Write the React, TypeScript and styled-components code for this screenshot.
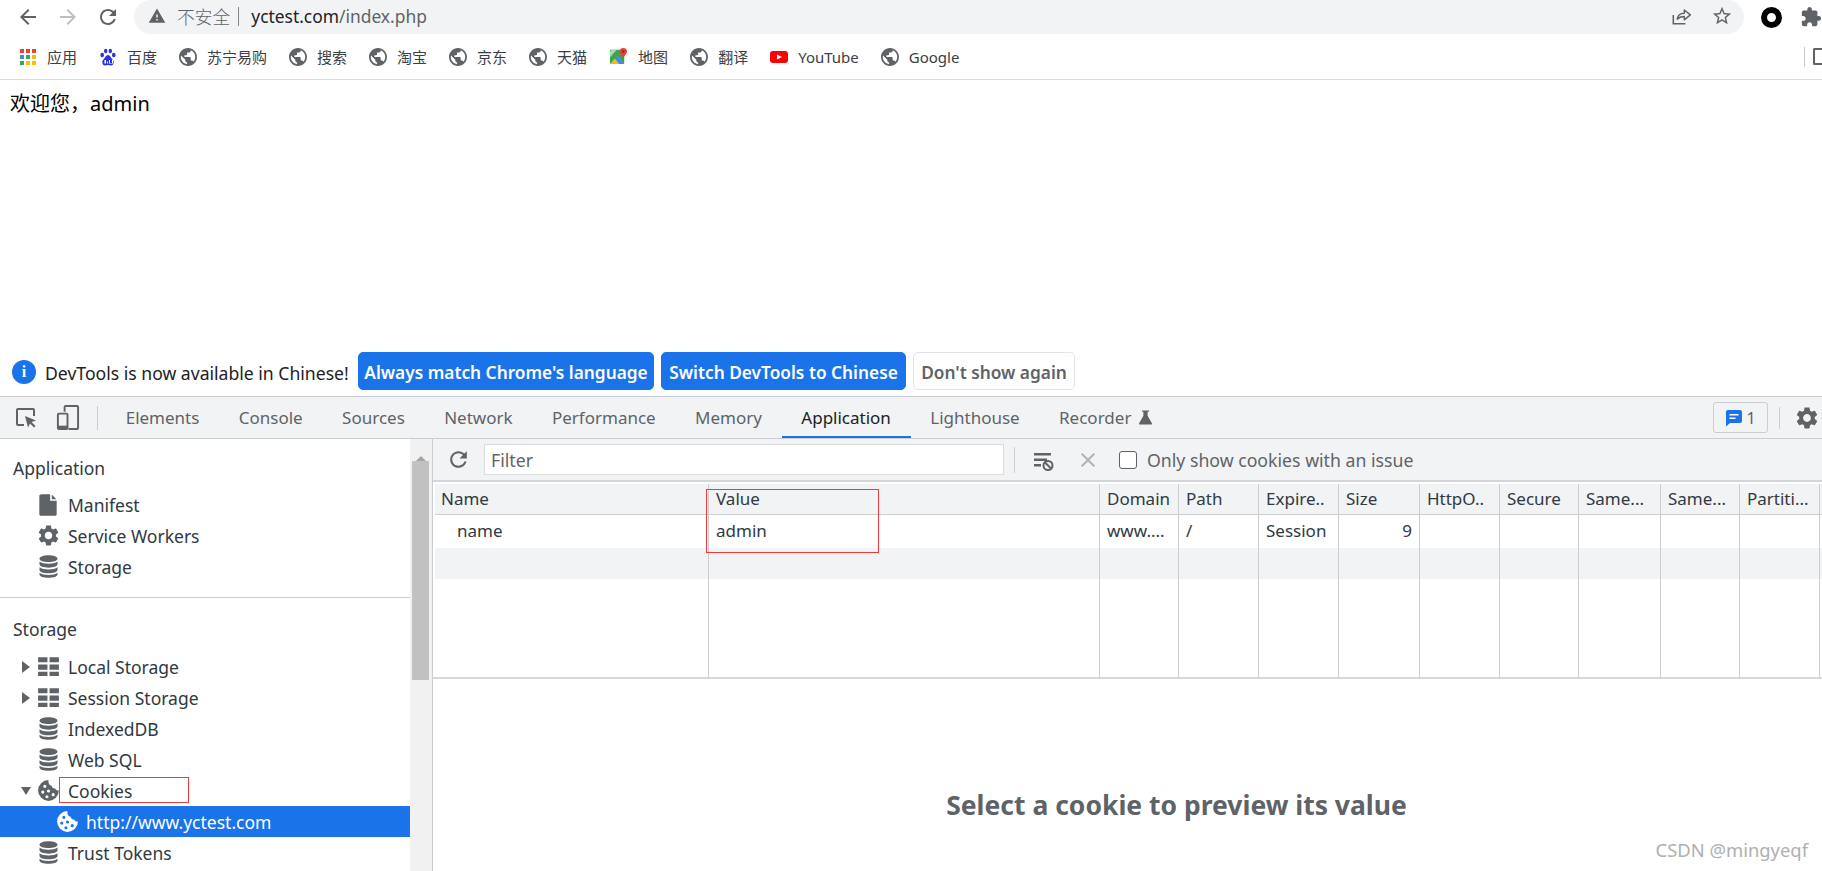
import React from "react";
import styled, { createGlobalStyle } from "styled-components";

const Global = createGlobalStyle`
  html, body { margin: 0; padding: 0; background: #fff; }
  body { font-family: "Noto Sans", "Noto Sans CJK SC", sans-serif; color: #202124; }
  svg { display: block; flex: none; }
  * { box-sizing: border-box; }
`;

const P = {
  back: "M20 11H7.83l5.59-5.59L12 4l-8 8 8 8 1.41-1.41L7.83 13H20v-2z",
  forward: "M12 4l-1.41 1.41L16.17 11H4v2h12.17l-5.58 5.59L12 20l8-8z",
  reload: "M17.65 6.35C16.2 4.9 14.21 4 12 4c-4.42 0-7.99 3.58-7.99 8s3.57 8 7.99 8c3.73 0 6.84-2.55 7.73-6h-2.08c-.82 2.33-3.04 4-5.65 4-3.31 0-6-2.69-6-6s2.69-6 6-6c1.66 0 3.14.69 4.22 1.78L13 11h7V4l-2.35 2.35z",
  warn: "M1 21h22L12 2 1 21zm12-3h-2v-2h2v2zm0-4h-2v-4h2v4z",
  globe: "M12 2C6.48 2 2 6.48 2 12s4.48 10 10 10 10-4.48 10-10S17.52 2 12 2zm-1 17.93c-3.95-.49-7-3.85-7-7.93 0-.62.08-1.21.21-1.79L9 15v1c0 1.1.9 2 2 2v1.93zm6.9-2.54c-.26-.81-1-1.39-1.9-1.39h-1v-3c0-.55-.45-1-1-1H8v-2h2c.55 0 1-.45 1-1V7h2c1.1 0 2-.9 2-2v-.41c2.93 1.19 5 4.06 5 7.41 0 2.08-.8 3.97-2.1 5.39z",
  star: "M22 9.24l-7.19-.62L12 2 9.19 8.63 2 9.24l5.46 4.73L5.82 21 12 17.27 18.18 21l-1.63-7.03L22 9.24zM12 15.4l-3.76 2.27 1-4.28-3.32-2.88 4.38-.38L12 6.1l1.71 4.04 4.38.38-3.32 2.88 1 4.28L12 15.4z",
  puzzle: "M20.5 11H19V7c0-1.1-.9-2-2-2h-4V3.5C13 2.12 11.88 1 10.5 1S8 2.12 8 3.5V5H4c-1.1 0-1.99.9-1.99 2v3.8H3.5c1.49 0 2.7 1.21 2.7 2.7s-1.21 2.7-2.7 2.7H2V20c0 1.1.9 2 2 2h3.8v-1.5c0-1.49 1.21-2.7 2.7-2.7 1.49 0 2.7 1.21 2.7 2.7V22H17c1.1 0 2-.9 2-2v-4h1.5c1.38 0 2.5-1.12 2.5-2.5S21.88 11 20.5 11z",
  gear: "M19.14 12.94c.04-.3.06-.61.06-.94 0-.32-.02-.64-.07-.94l2.03-1.58c.18-.14.23-.41.12-.61l-1.92-3.32c-.12-.22-.37-.29-.59-.22l-2.39.96c-.5-.38-1.03-.7-1.62-.94l-.36-2.54c-.04-.24-.24-.41-.48-.41h-3.84c-.24 0-.43.17-.47.41l-.36 2.54c-.59.24-1.13.57-1.62.94l-2.39-.96c-.22-.08-.47 0-.59.22L2.74 8.87c-.12.21-.08.47.12.61l2.03 1.58c-.05.3-.09.63-.09.94s.02.64.07.94l-2.03 1.58c-.18.14-.23.41-.12.61l1.92 3.32c.12.22.37.29.59.22l2.39-.96c.5.38 1.03.7 1.62.94l.36 2.54c.05.24.24.41.48.41h3.84c.24 0 .44-.17.47-.41l.36-2.54c.59-.24 1.13-.56 1.62-.94l2.39.96c.22.08.47 0 .59-.22l1.92-3.32c.12-.22.07-.47-.12-.61l-2.01-1.58zM12 15.6c-1.98 0-3.6-1.62-3.6-3.6s1.62-3.6 3.6-3.6 3.6 1.62 3.6 3.6-1.62 3.6-3.6 3.6z",
  db: "M12 2C7.6 2 4 3.3 4 5s3.6 3 8 3 8-1.3 8-3-3.6-3-8-3zM4 7.6V10c0 1.7 3.6 3 8 3s8-1.3 8-3V7.6C18.4 9 15.4 9.6 12 9.6S5.6 9 4 7.6zM4 12.6V15c0 1.7 3.6 3 8 3s8-1.3 8-3v-2.4c-1.6 1.4-4.6 2-8 2s-6.4-.6-8-2zM4 17.6V19c0 1.7 3.6 3 8 3s8-1.3 8-3v-1.4c-1.6 1.4-4.6 2-8 2s-6.4-.6-8-2z",
  table: "M2 3h9v5H2zM13 3h9v5h-9zM2 10h9v5H2zM13 10h9v5h-9zM2 17h9v4H2zM13 17h9v4h-9z",
  cookie: "M12 2a10 10 0 1 0 10 10c-1.5.3-3-.4-3.5-2-1.7.3-3.3-.8-3.5-2.5C13.2 7.3 11.5 5.5 12 2zM8.5 6.5a1.5 1.5 0 1 1 0 3 1.5 1.5 0 0 1 0-3zM6.5 12a1.5 1.5 0 1 1 0 3 1.5 1.5 0 0 1 0-3zM12 11a1.5 1.5 0 1 1 0 3 1.5 1.5 0 0 1 0-3zM10.5 16.5a1.5 1.5 0 1 1 0 3 1.5 1.5 0 0 1 0-3zM16.5 14.5a1.5 1.5 0 1 1 0 3 1.5 1.5 0 0 1 0-3z",
  flask: "M7 2h10v2h-2v5.5L21 20c.5 1-.2 2-1.3 2H4.3C3.2 22 2.5 21 3 20L9 9.5V4H7z",
  file: "M6 2h8v6h6v12.5c0 .8-.7 1.5-1.5 1.5h-13C4.7 22 4 21.3 4 20.5v-17C4 2.7 5 2 6 2zM15.5 2.4l4.2 4.2h-4.2z",
  clear: "M3 5h17v2.5H3zM3 10.5h13V13H3zM3 16h7v2.5H3z",
};

const Svg = styled.svg<{ $size: number; $color?: string }>`
  width: ${(p) => p.$size}px;
  height: ${(p) => p.$size}px;
  fill: ${(p) => p.$color ?? "#5f6368"};
`;

const Icon = ({ d, size = 18, color }: { d: string; size?: number; color?: string }) => (
  <Svg viewBox="0 0 24 24" $size={size} $color={color}>
    <path d={d} fillRule="evenodd" />
  </Svg>
);

const Globe = () => (
  <Svg viewBox="2 2 20 20" $size={18}>
    <path d={P.globe} fillRule="evenodd" />
  </Svg>
);

const Page = styled.div`
  position: relative;
  width: 1822px;
  height: 871px;
  overflow: hidden;
  display: flex;
  flex-direction: column;
`;

const AddressRow = styled.div`
  height: 40px;
  display: flex;
  align-items: flex-start;
  flex: none;
`;
const NavGroup = styled.div`
  width: 134px;
  height: 34px;
  display: flex;
  align-items: center;
  padding-left: 16px;
  gap: 16px;
`;
const Omnibox = styled.div`
  width: 1611px;
  height: 34px;
  border-radius: 17px;
  background: #f1f3f4;
  display: flex;
  align-items: center;
  padding: 0 11px 2px 14px;
  font-size: 17.4px;
  color: #5f6368;
`;
const Insecure = styled.span`
  margin-left: 11px;
  font-size: 17.8px;
  font-weight: 300;
`;
const PipeMark = styled.span`
  width: 1px;
  height: 19px;
  background: #80868b;
  margin: 0 12px 0 8px;
`;
const Host = styled.span`
  color: #202124;
`;
const UrlPath = styled.span``;
const OmniActions = styled.div`
  margin-left: auto;
  display: flex;
  align-items: center;
  gap: 19px;
`;
const ExtGroup = styled.div`
  display: flex;
  align-items: center;
  height: 34px;
  gap: 18px;
  padding-left: 17px;
`;
const Ring = styled.span`
  width: 21px;
  height: 21px;
  border-radius: 50%;
  border: 6px solid #000;
`;

const BookmarkBar = styled.div`
  height: 40px;
  flex: none;
  border-bottom: 1px solid #d9dadc;
  display: flex;
  align-items: center;
  padding: 0 0 6px 19px;
  gap: 22px;
`;
const Bookmark = styled.div`
  display: flex;
  align-items: center;
  gap: 10px;
  font-size: 15px;
  color: #3c4043;
`;
const BarEnd = styled.div`
  margin-left: auto;
  display: flex;
  align-items: center;
  gap: 8px;
  margin-right: -3px;
`;
const BarSep = styled.span`
  width: 1px;
  height: 20px;
  background: #c8cacc;
`;
const ListIcon = styled.span`
  width: 12px;
  height: 17px;
  border: 2px solid #5f6368;
  border-right: none;
  border-radius: 2px 0 0 2px;
`;

const PageBody = styled.div`
  flex: 1;
  padding: 12px 10px 0;
  font-size: 20px;
  line-height: 24px;
  color: #000;
`;

const Infobar = styled.div`
  flex: none;
  height: 44px;
  display: flex;
  align-items: flex-start;
  padding-left: 12px;
  font-size: 17.6px;
  color: #202124;
`;
const InfoDot = styled.span`
  width: 24px;
  height: 24px;
  margin-top: 8px;
  border-radius: 50%;
  background: #1a73e8;
  color: #fff;
  font: 700 16px/24px "Liberation Serif", serif;
  text-align: center;
`;
const InfoText = styled.span`
  margin: 0 10px 0 9px;
  line-height: 42px;
  width: 303px;
  white-space: nowrap;
`;
const InfoBtn = styled.button<{ $primary?: boolean; $w: number }>`
  width: ${(p) => p.$w}px;
  height: 38px;
  margin-right: 7px;
  padding: 2px 0 0;
  border-radius: 5px;
  border: 1px solid ${(p) => (p.$primary ? "#1a73e8" : "#e2e3e5")};
  background: ${(p) => (p.$primary ? "#1a73e8" : "#fff")};
  color: ${(p) => (p.$primary ? "#fff" : "#5f6368")};
  font: 600 17.3px "Noto Sans", sans-serif;
  white-space: nowrap;
`;

const DevTools = styled.div`
  flex: none;
  height: 475px;
  border-top: 1px solid #cacdd1;
  display: flex;
  flex-direction: column;
`;
const TabBar = styled.div`
  height: 42px;
  flex: none;
  background: #f1f3f4;
  border-bottom: 1px solid #cacdd1;
  display: flex;
  align-items: stretch;
  padding-left: 15px;
`;
const ToolIcons = styled.div`
  display: flex;
  align-items: center;
  gap: 18px;
`;
const VSep = styled.span<{ $h?: number }>`
  width: 1px;
  height: ${(p) => p.$h ?? 24}px;
  background: #cacdd1;
  flex: none;
`;
const TabSep = styled(VSep)`
  align-self: center;
  margin: 0 8px 0 17px;
`;
const Tab = styled.div<{ $active?: boolean }>`
  display: flex;
  align-items: center;
  gap: 6px;
  padding: 0 19.7px;
  font-size: 17px;
  color: ${(p) => (p.$active ? "#202124" : "#5f6368")};
  box-shadow: ${(p) => (p.$active ? "inset 0 -2px 0 #1a73e8" : "none")};
`;
const TabRight = styled.div`
  margin-left: auto;
  display: flex;
  align-items: center;
  padding-right: 2px;
`;
const IssueBtn = styled.div`
  width: 55px;
  height: 31px;
  border: 1px solid #cacdd1;
  border-radius: 3px;
  display: flex;
  align-items: center;
  justify-content: center;
  gap: 3px;
  font-size: 16px;
  color: #5f6368;
  margin-right: 11px;
`;
const GearSlot = styled.div`
  margin-left: 14px;
`;

const Main = styled.div`
  flex: 1;
  min-height: 0;
  display: flex;
`;
const Sidebar = styled.div`
  width: 410px;
  flex: none;
  overflow: hidden;
  font-size: 17.5px;
  color: #303942;
`;
const SideHead = styled.div<{ $top: number; $bottom: number }>`
  padding: ${(p) => p.$top}px 13px ${(p) => p.$bottom}px;
  line-height: 32px;
`;
const SideRow = styled.div<{ $child?: boolean; $selected?: boolean }>`
  height: 31px;
  display: flex;
  align-items: center;
  padding-left: ${(p) => (p.$child ? 55 : 21)}px;
  background: ${(p) => (p.$selected ? "#1a73e8" : "transparent")};
  color: ${(p) => (p.$selected ? "#fff" : "inherit")};
  white-space: nowrap;
`;
const Arrow = styled.span<{ $open?: boolean }>`
  width: 15px;
  flex: none;
  display: flex;
  &::before {
    content: "";
    display: ${(p) => (p.$open === undefined ? "none" : "block")};
    border-style: solid;
    border-color: transparent;
    ${(p) =>
      p.$open
        ? "border-width: 8px 5.5px 0; border-top-color: #5f6368;"
        : "margin-left: 1px; border-width: 6px 0 6px 8px; border-left-color: #5f6368;"}
  }
`;
const RowIcon = styled.span<{ $gap?: number }>`
  width: 24px;
  display: flex;
  justify-content: center;
  margin-right: ${(p) => p.$gap ?? 8}px;
  flex: none;
`;
const SideRule = styled.div`
  height: 1px;
  margin-top: 15px;
  background: #cacdd1;
`;
const Scroll = styled.div`
  width: 23px;
  flex: none;
  background: #f1f1f1;
  border-right: 1px solid #cacdd1;
  display: flex;
  flex-direction: column;
  align-items: flex-start;
  padding-left: 2px;
`;
const ScrollUp = styled.span`
  margin: 0 0 6px 4px;
  height: 16px;
  border-style: solid;
  border-color: transparent transparent #a3a3a3;
  border-width: 0 5px 5px;
  width: 0;
  transform: translateY(6px);
`;
const Thumb = styled.div`
  width: 17px;
  height: 219px;
  background: #c1c1c1;
`;

const Right = styled.div`
  flex: 1;
  min-width: 0;
  display: flex;
  flex-direction: column;
  position: relative;
`;
const FilterBar = styled.div`
  height: 43px;
  flex: none;
  background: #f1f3f4;
  border-bottom: 2px solid #d3d5d8;
  display: flex;
  align-items: center;
  padding-left: 13px;
  font-size: 17.7px;
  color: #5f6368;
`;
const FilterInput = styled.div`
  width: 520px;
  height: 31px;
  margin-left: 13px;
  padding-left: 6px;
  background: #fff;
  border: 1px solid #dadce0;
  line-height: 31px;
  color: #5f6368;
`;
const FilterSep = styled(VSep)`
  margin: 0 16px 0 10px;
`;
const IconGap = styled.span`
  margin-left: 21px;
`;
const Check = styled.span`
  width: 18px;
  height: 18px;
  margin: 0 10px 0 19px;
  background: #fff;
  border: 1.5px solid #5f6368;
  border-radius: 3px;
`;

const Table = styled.div`
  flex: none;
  height: 197px;
  padding: 2px 0 0 2px;
  border-bottom: 2px solid #d5d7da;
  display: flex;
  flex-direction: column;
  font-size: 17px;
  color: #303942;
`;
const GridRow = styled.div<{ $h?: number; $bg?: string; $line?: boolean }>`
  display: grid;
  grid-template-columns: 274px 391px 79px 80px 80px 81px 80px 79px 82px 79px 80px;
  height: ${(p) => (p.$h ? `${p.$h}px` : "auto")};
  flex: ${(p) => (p.$h ? "none" : "1")};
  background: ${(p) => p.$bg ?? "#fff"};
  border-bottom: ${(p) => (p.$line ? "1px solid #cacdd1" : "none")};
`;
const Cell = styled.div<{ $pad?: number; $end?: boolean }>`
  border-right: 1px solid #cacdd1;
  padding: 0 ${(p) => (p.$end ? 7 : 0)}px 2px ${(p) => p.$pad ?? 7}px;
  display: flex;
  align-items: center;
  justify-content: ${(p) => (p.$end ? "flex-end" : "flex-start")};
  white-space: nowrap;
  overflow: hidden;
`;

const Preview = styled.div`
  flex: 1;
  padding: 110px 0 0 98px;
  text-align: center;
  font-size: 26.5px;
  line-height: 32px;
  font-weight: 700;
  color: #5f6368;
`;
const Watermark = styled.div`
  position: absolute;
  right: 14px;
  bottom: 10px;
  font-size: 18.4px;
  line-height: 22px;
  color: #b0b0b0;
`;
const RedBox = styled.div<{ $x: number; $y: number; $w: number; $h: number }>`
  position: absolute;
  left: ${(p) => p.$x}px;
  top: ${(p) => p.$y}px;
  width: ${(p) => p.$w}px;
  height: ${(p) => p.$h}px;
  border: 1px solid #f03a3a;
  pointer-events: none;
`;

const GridDots = () => (
  <Svg viewBox="0 0 18 18" $size={18}>
    {[0, 1, 2].flatMap((r) =>
      [0, 1, 2].map((c) => (
        <rect
          key={`${r}${c}`}
          x={1 + c * 6}
          y={1 + r * 6}
          width="4"
          height="4"
          fill={[["#ea4335", "#ea4335", "#ea4335"], ["#4285f4", "#34a853", "#fbbc04"], ["#34a853", "#fbbc04", "#fbbc04"]][r][c]}
        />
      ))
    )}
  </Svg>
);

const Baidu = () => (
  <Svg viewBox="0 0 18 18" $size={18} $color="#2932e1">
    <ellipse cx="3.2" cy="7" rx="1.8" ry="2.3" />
    <ellipse cx="6.7" cy="3" rx="1.7" ry="2.3" />
    <ellipse cx="11.3" cy="3" rx="1.7" ry="2.3" />
    <ellipse cx="14.8" cy="7" rx="1.8" ry="2.3" />
    <path d="M9 7c-2 0-3 3-5 5-1.5 2-.5 5.5 2 5.5 1 0 2-.4 3-.4s2 .4 3 .4c2.5 0 3.5-3.500 2-5.500-2-2-3-5-5-5z" />
    <path d="M5.5 12H7v3.5H5.500zM8 13.500h1v2H8zM10 12h1v3h2v-3h1v3.500h-4z" fill="#fff" />
  </Svg>
);

const Maps = () => (
  <Svg viewBox="0 0 20 20" $size={19}>
    <rect x="1" y="3" width="15" height="15" rx="1" fill="#34a853" />
    <path d="M1 18 L9 9 L16 18z" fill="#fbbc04" />
    <path d="M9 9l7 9h-5L6 12z" fill="#4285f4" />
    <path d="M3 3h5L1 11V5z" fill="#a8dab5" />
    <path d="M15 1c2.5 0 4 1.8 4 3.7 0 2.3-3 4.5-4 7.3-1-2.8-4-5-4-7.3C11 2.8 12.5 1 15 1z" fill="#ea4335" />
    <circle cx="15" cy="4.8" r="1.4" fill="#a52714" />
  </Svg>
);

const YouTube = () => (
  <Svg viewBox="0 0 18 14" $size={18}>
    <rect x="0" y="1" width="18" height="12" rx="3" fill="#f00" />
    <path d="M7 4.5L12 7l-5 2.5z" fill="#fff" />
  </Svg>
);

const Share = () => (
  <Svg viewBox="0 0 20 20" $size={22}>
    <path d="M3 9v8h11" fill="none" stroke="#5f6368" strokeWidth="1.4" />
    <path d="M6.5 13c.5-3.5 3-5.500 6.500-5.500V4.500l5.500 4.500-5.500 4.500v-3c-2.700 0-5 .8-6.500 2.500z" fill="none" stroke="#5f6368" strokeWidth="1.3" strokeLinejoin="round" />
  </Svg>
);

const Inspect = () => (
  <Svg viewBox="0 0 22 22" $size={22}>
    <path d="M9 18H3a1 1 0 0 1-1-1V3a1 1 0 0 1 1-1h15a1 1 0 0 1 1 1v6" fill="none" stroke="#5f6368" strokeWidth="2" />
    <path d="M10 9l11 4.5-4.500 1.500 4 4-1.500 1.500-4-4L13 20.500z" fill="#5f6368" />
  </Svg>
);

const Device = () => (
  <Svg viewBox="0 0 24 26" $size={25}>
    <path d="M9 7V2a1 1 0 0 1 1-1h12a1 1 0 0 1 1 1v22a1 1 0 0 1-1 1H13" fill="none" stroke="#5f6368" strokeWidth="2" />
    <rect x="2" y="9" width="10" height="16" rx="1" fill="none" stroke="#5f6368" strokeWidth="2" />
    <rect x="2" y="21.5" width="10" height="3.5" fill="#5f6368" />
  </Svg>
);

const ClearFilter = () => (
  <Svg viewBox="0 0 24 24" $size={24}>
    <path d={P.clear} />
    <circle cx="17" cy="17.5" r="4.5" fill="none" stroke="#5f6368" strokeWidth="2" />
    <path d="M14 14.5l6 6" stroke="#5f6368" strokeWidth="2" />
  </Svg>
);

const Bubble = () => (
  <Svg viewBox="0 0 18 18" $size={18} $color="#1a73e8">
    <path d="M3 1h12a2 2 0 0 1 2 2v9a2 2 0 0 1-2 2H5l-4 3.5V3a2 2 0 0 1 2-2z" />
    <path d="M4.5 5h9v1.500h-9zM4.500 8.500h6V10h-6z" fill="#fff" />
  </Svg>
);

const Cross = () => (
  <Svg viewBox="0 0 24 24" $size={24} $color="#b0b3b8">
    <path d="M19 6.41L17.59 5 12 10.59 6.41 5 5 6.41 10.59 12 5 17.59 6.41 19 12 13.41 17.59 19 19 17.59 13.41 12z" />
  </Svg>
);

const marks = ["苏宁易购", "搜索", "淘宝", "京东", "天猫"];
const tabs = ["Elements", "Console", "Sources", "Network", "Performance", "Memory", "Application", "Lighthouse"];
const headers = ["Name", "Value", "Domain", "Path", "Expire..", "Size", "HttpO..", "Secure", "Same...", "Same...", "Partiti..."];
const blank = Array.from({ length: 11 });

export default function App() {
  return (
    <Page>
      <Global />
      <AddressRow>
        <NavGroup>
          <Icon d={P.back} size={24} />
          <Icon d={P.forward} size={24} color="#bdc1c6" />
          <Icon d={P.reload} size={24} />
        </NavGroup>
        <Omnibox>
          <Icon d={P.warn} size={18} />
          <Insecure>不安全</Insecure>
          <PipeMark />
          <Host>yctest.com</Host>
          <UrlPath>/index.php</UrlPath>
          <OmniActions>
            <Share />
            <Icon d={P.star} size={22} />
          </OmniActions>
        </Omnibox>
        <ExtGroup>
          <Ring />
          <Icon d={P.puzzle} size={22} />
        </ExtGroup>
      </AddressRow>
      <BookmarkBar>
        <Bookmark><GridDots />应用</Bookmark>
        <Bookmark><Baidu />百度</Bookmark>
        {marks.map((m) => (
          <Bookmark key={m}><Globe />{m}</Bookmark>
        ))}
        <Bookmark><Maps />地图</Bookmark>
        <Bookmark><Globe />翻译</Bookmark>
        <Bookmark><YouTube />YouTube</Bookmark>
        <Bookmark><Globe />Google</Bookmark>
        <BarEnd><BarSep /><ListIcon /></BarEnd>
      </BookmarkBar>
      <PageBody>欢迎您，admin</PageBody>
      <Infobar>
        <InfoDot>i</InfoDot>
        <InfoText>DevTools is now available in Chinese!</InfoText>
        <InfoBtn $primary $w={296}>Always match Chrome's language</InfoBtn>
        <InfoBtn $primary $w={245}>Switch DevTools to Chinese</InfoBtn>
        <InfoBtn $w={162}>Don't show again</InfoBtn>
      </Infobar>
      <DevTools>
        <TabBar>
          <ToolIcons>
            <Inspect />
            <Device />
          </ToolIcons>
          <TabSep />
          {tabs.map((t) => (
            <Tab key={t} $active={t === "Application"}>{t}</Tab>
          ))}
          <Tab>Recorder <Icon d={P.flask} size={17} /></Tab>
          <TabRight>
            <IssueBtn><Bubble />1</IssueBtn>
            <VSep $h={22} />
            <GearSlot><Icon d={P.gear} size={26} /></GearSlot>
          </TabRight>
        </TabBar>
        <Main>
          <Sidebar>
            <SideHead $top={13} $bottom={5}>Application</SideHead>
            <SideRow><Arrow /><RowIcon><Icon d={P.file} size={26} /></RowIcon>Manifest</SideRow>
            <SideRow><Arrow /><RowIcon><Icon d={P.gear} size={25} /></RowIcon>Service Workers</SideRow>
            <SideRow><Arrow /><RowIcon><Icon d={P.db} size={27} /></RowIcon>Storage</SideRow>
            <SideRule />
            <SideHead $top={15} $bottom={6}>Storage</SideHead>
            <SideRow><Arrow $open={false} /><RowIcon><Icon d={P.table} size={25} /></RowIcon>Local Storage</SideRow>
            <SideRow><Arrow $open={false} /><RowIcon><Icon d={P.table} size={25} /></RowIcon>Session Storage</SideRow>
            <SideRow><Arrow /><RowIcon><Icon d={P.db} size={27} /></RowIcon>IndexedDB</SideRow>
            <SideRow><Arrow /><RowIcon><Icon d={P.db} size={27} /></RowIcon>Web SQL</SideRow>
            <SideRow><Arrow $open /><RowIcon><Icon d={P.cookie} size={25} /></RowIcon>Cookies</SideRow>
            <SideRow $child $selected><RowIcon $gap={7}><Icon d={P.cookie} size={25} color="#fff" /></RowIcon>http://www.yctest.com</SideRow>
            <SideRow><Arrow /><RowIcon><Icon d={P.db} size={27} /></RowIcon>Trust Tokens</SideRow>
          </Sidebar>
          <Scroll>
            <ScrollUp />
            <Thumb />
          </Scroll>
          <Right>
            <FilterBar>
              <Icon d={P.reload} size={25} />
              <FilterInput>Filter</FilterInput>
              <FilterSep $h={26} />
              <ClearFilter />
              <IconGap><Cross /></IconGap>
              <Check />
              Only show cookies with an issue
            </FilterBar>
            <Table>
              <GridRow $h={31} $bg="#f1f3f4" $line>
                {headers.map((h, i) => <Cell key={i} $pad={i === 0 ? 6 : undefined}>{h}</Cell>)}
              </GridRow>
              <GridRow $h={33}>
                <Cell $pad={22}>name</Cell>
                <Cell>admin</Cell>
                <Cell>www....</Cell>
                <Cell>/</Cell>
                <Cell>Session</Cell>
                <Cell $end>9</Cell>
                {Array.from({ length: 5 }).map((_, i) => <Cell key={i} />)}
              </GridRow>
              <GridRow $h={31} $bg="#f1f3f4">
                {blank.map((_, i) => <Cell key={i} />)}
              </GridRow>
              <GridRow>
                {blank.map((_, i) => <Cell key={i} />)}
              </GridRow>
            </Table>
            <Preview>Select a cookie to preview its value</Preview>
            <Watermark>CSDN @mingyeqf</Watermark>
          </Right>
        </Main>
      </DevTools>
      <RedBox $x={59} $y={777} $w={130} $h={26} />
      <RedBox $x={706} $y={489} $w={173} $h={64} />
    </Page>
  );
}
